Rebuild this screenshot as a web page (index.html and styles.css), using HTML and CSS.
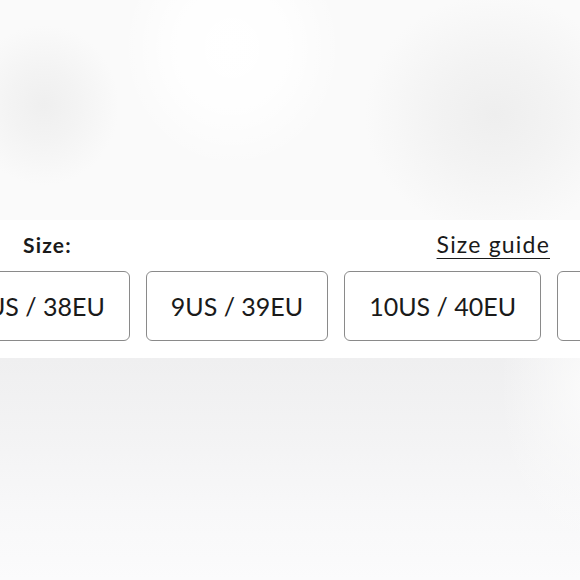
FILE: index.html
```html
<!DOCTYPE html>
<html lang="en">
<head>
<meta charset="utf-8">
<title>Size selector</title>
<link rel="stylesheet" href="styles.css">
</head>
<body>
<div class="backdrop backdrop-top"></div>
<section class="size-panel">
  <div class="size-header">
    <span class="size-label">Size:</span>
    <a class="size-guide" href="#">Size guide</a>
  </div>
  <div class="size-scroller" id="scroller">
    <div class="size-list">
      <button class="size-btn">7US / 37EU</button>
      <button class="size-btn">8US / 38EU</button>
      <button class="size-btn">9US / 39EU</button>
      <button class="size-btn">10US / 40EU</button>
      <button class="size-btn">11US / 41EU</button>
    </div>
  </div>
</section>
<div class="backdrop backdrop-bottom"></div>
<script src="script.js"></script>
</body>
</html>
```
FILE: styles.css
```css
html, body {
  margin: 0;
  padding: 0;
}
body {
  width: 580px;
  height: 580px;
  overflow: hidden;
  background: #fafafa;
  font-family: Lato, "Open Sans", sans-serif;
  color: #1a1a1a;
  display: flex;
  flex-direction: column;
}
.backdrop-top {
  height: 220px;
  background:
    radial-gradient(ellipse 110px 120px at 232px 48px, #ffffff 0%, rgba(255,255,255,0.8) 50%, rgba(255,255,255,0) 100%),
    radial-gradient(ellipse 75px 80px at 44px 105px, #efefef 0%, rgba(239,239,239,0.6) 45%, rgba(250,250,250,0) 100%),
    radial-gradient(ellipse 130px 120px at 495px 115px, #eeeeee 0%, rgba(238,238,238,0.6) 45%, rgba(250,250,250,0) 100%),
    #fafafa;
}
.backdrop-bottom {
  flex: 1;
  background:
    radial-gradient(ellipse 90px 160px at 590px 30px, rgba(252,252,252,0.9) 0%, rgba(252,252,252,0) 100%),
    linear-gradient(to bottom, #efeff0 0%, #f3f3f4 35%, #f8f8f9 70%, #fbfbfc 100%);
}
.size-panel {
  background: #ffffff;
  height: 138px;
  padding-top: 10px;
  box-sizing: border-box;
  display: flex;
  flex-direction: column;
  gap: 13px;
}
.size-header {
  display: flex;
  justify-content: space-between;
  align-items: baseline;
  padding: 0 30px 0 23px;
  height: 28px;
  line-height: 28px;
}
.size-label {
  font-weight: 700;
  font-size: 21px;
  letter-spacing: 1.2px;
}
.size-guide {
  font-size: 23px;
  letter-spacing: 1.2px;
  color: #1a1a1a;
  text-decoration: underline;
  text-underline-offset: 5px;
  text-decoration-thickness: 1px;
}
.size-scroller {
  overflow-x: auto;
  scrollbar-width: none;
}
.size-scroller::-webkit-scrollbar {
  display: none;
}
.size-list {
  display: flex;
  gap: 16px;
  padding: 0 24px;
  width: max-content;
}
.size-btn {
  height: 70px;
  padding: 0 24px;
  background: #ffffff;
  border: 1.5px solid #8a8a8a;
  border-radius: 6px;
  font-family: Lato, "Open Sans", sans-serif;
  font-size: 25px;
  color: #1a1a1a;
  white-space: nowrap;
}
```
FILE: script.js
```js
var s = document.getElementById('scroller');
var btns = s.querySelectorAll('.size-btn');
s.scrollLeft = btns[2].offsetLeft - 146;
```
